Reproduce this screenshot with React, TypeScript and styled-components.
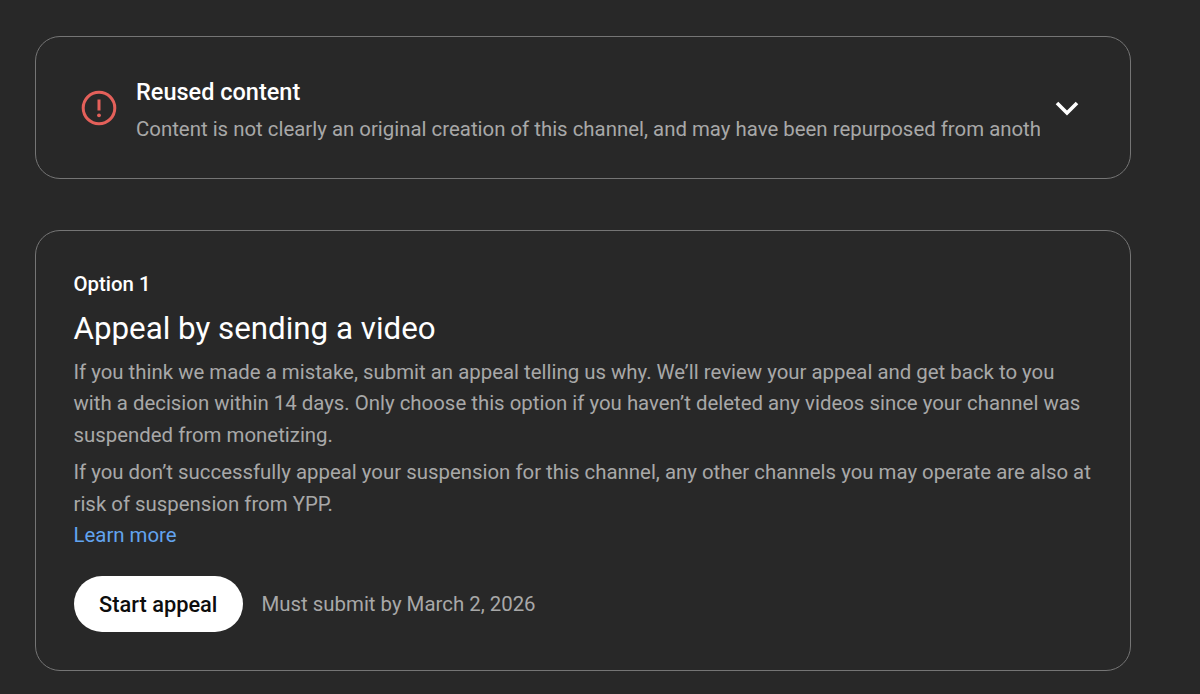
import React from "react";
import styled, { createGlobalStyle } from "styled-components";

const Global = createGlobalStyle`
  html, body { margin: 0; padding: 0; background: #282828; }
  body { font-family: Roboto, "Liberation Sans", sans-serif; }
`;

const Page = styled.main`
  width: 1200px;
  height: 694px;
  box-sizing: border-box;
  padding: 36px 69px 0 35px;
  overflow: hidden;
  background: #282828;
  display: flex;
  flex-direction: column;
  gap: 51px;
`;

const Card = styled.section`
  border: 1px solid #757575;
  border-radius: 25px;
  box-sizing: border-box;
`;

const IssueCard = styled(Card)`
  height: 143px;
  display: flex;
  align-items: center;
  padding: 0 45px;
`;

const IssueIcon = styled.svg`
  width: 36px;
  height: 36px;
  flex: none;
  margin-right: 19px;
`;

const IssueText = styled.div`
  flex: 1;
  min-width: 0;
  overflow: hidden;
  white-space: nowrap;
  padding-top: 7px;
`;

const IssueTitle = styled.h3`
  margin: 0 0 6px;
  font-size: 23.5px;
  line-height: 31px;
  font-weight: 500;
  color: #fff;
`;

const Muted = styled.p`
  margin: 0;
  font-size: 20.4px;
  line-height: 31.4px;
  font-weight: 400;
  color: #a8a8a8;
`;

const Chevron = styled.svg`
  width: 36px;
  height: 36px;
  flex: none;
  margin-left: 9px;
`;

const OptionCard = styled(Card)`
  height: 441px;
  padding: 38px 37px 0 37.5px;
`;

const OptionLabel = styled.div`
  font-size: 20.4px;
  line-height: 30px;
  font-weight: 500;
  color: #fff;
`;

const OptionTitle = styled.h2`
  margin: 9px 0 7px;
  font-size: 31.3px;
  line-height: 42px;
  font-weight: 400;
  color: #fff;
`;

const Paragraph = styled(Muted)`
  margin-bottom: 6px;
`;

const LearnMore = styled.a`
  display: block;
  font-size: 20.4px;
  line-height: 31px;
  color: #62a3ef;
`;

const Actions = styled.div`
  margin-top: 25px;
  display: flex;
  align-items: center;
  gap: 18.5px;
`;

const PrimaryButton = styled.button`
  width: 169.5px;
  height: 56px;
  border: 0;
  border-radius: 28px;
  background: #fff;
  color: #0d0d0d;
  font: 500 21.8px Roboto, sans-serif;
`;

const Deadline = styled(Muted)`
  white-space: nowrap;
  padding-top: 1px;
`;

export default function App() {
  return (
    <Page>
      <Global />
      <IssueCard>
        <IssueIcon viewBox="0 0 36 36" fill="none">
          <circle cx="18" cy="18" r="15.8" stroke="#e4605a" strokeWidth="3" />
          <path d="M18 9.5v11" stroke="#e4605a" strokeWidth="3" />
          <circle cx="18" cy="25.3" r="1.9" fill="#e4605a" />
        </IssueIcon>
        <IssueText>
          <IssueTitle>Reused content</IssueTitle>
          <Muted>Content is not clearly an original creation of this channel, and may have been repurposed from anoth</Muted>
        </IssueText>
        <Chevron viewBox="0 0 36 36" fill="none">
          <path d="M8 13l10 10 10-10" stroke="#fff" strokeWidth="3.6" />
        </Chevron>
      </IssueCard>
      <OptionCard>
        <OptionLabel>Option 1</OptionLabel>
        <OptionTitle>Appeal by sending a video</OptionTitle>
        <Paragraph>If you think we made a mistake, submit an appeal telling us why. We’ll review your appeal and get back to you with a decision within 14 days. Only choose this option if you haven’t deleted any videos since your channel was suspended from monetizing.</Paragraph>
        <Muted>If you don’t successfully appeal your suspension for this channel, any other channels you may operate are also at risk of suspension from YPP.</Muted>
        <LearnMore>Learn more</LearnMore>
        <Actions>
          <PrimaryButton>Start appeal</PrimaryButton>
          <Deadline>Must submit by March 2, 2026</Deadline>
        </Actions>
      </OptionCard>
    </Page>
  );
}
